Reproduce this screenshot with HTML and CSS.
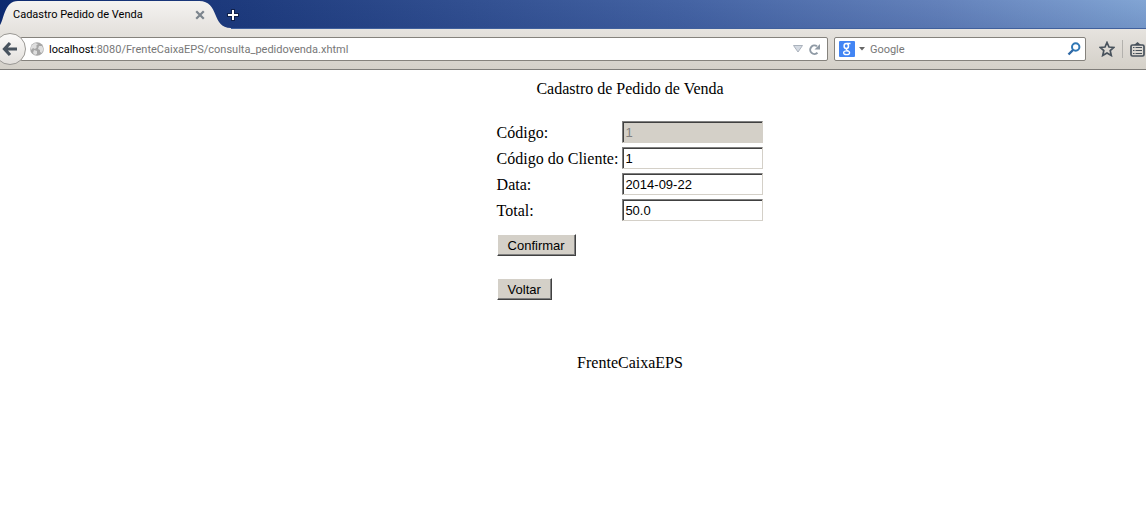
FILE: index.html
```html
<!DOCTYPE html>
<html lang="pt-BR">
<head>
<meta charset="utf-8">
<title>Cadastro Pedido de Venda</title>
<link rel="stylesheet" href="styles.css">
</head>
<body>
<header class="browser">
  <div class="tabs">
    <div class="tab">
      <svg class="tab-shape" width="234" height="29" viewBox="0 0 234 29" aria-hidden="true">
        <defs><linearGradient id="tabfill" x1="0" y1="0" x2="0" y2="1"><stop offset="0" stop-color="#f4f3f1"/><stop offset="1" stop-color="#e6e3df"/></linearGradient></defs>
        <path d="M0 29V25C4 20 4 1 18 1H199C220 1 211 28 231 28V29Z" fill="url(#tabfill)"/>
      </svg>
      <span class="tab-title">Cadastro Pedido de Venda</span>
      <button class="icon-button" type="button" aria-label="Fechar aba">
        <svg width="10" height="10" viewBox="0 0 10 10"><path d="M2 2L8 8M8 2L2 8" stroke="#7c858d" stroke-width="2.2" stroke-linecap="square"/></svg>
      </button>
    </div>
    <button class="icon-button" type="button" aria-label="Nova aba">
      <svg width="14" height="14" viewBox="0 0 14 14"><path d="M7 1V13M1 7H13" stroke="#10204a" stroke-width="4"/><path d="M7 2V12M2 7H12" stroke="#fff" stroke-width="2"/></svg>
    </button>
  </div>
  <div class="toolbar">
    <button class="back" type="button" aria-label="Voltar uma página">
      <svg width="16" height="16" viewBox="0 0 16 16"><path d="M8 2L2.500 8L8 14M3 8H15" fill="none" stroke="#48535e" stroke-width="3.200"/></svg>
    </button>
    <div class="field address">
      <svg width="14" height="14" viewBox="0 0 14 14" aria-hidden="true"><circle cx="7" cy="7" r="6.800" fill="#a6a6a6"/><path d="M2 3L5 1L8 2L6 4L7 5L5 7L3 6L1 8L0.500 6ZM9 4L12 4L13.500 7L12 11L10 10L10 8L8 7ZM4 8L7 9L7 12L5 13L3 11Z" fill="#dedede"/></svg>
      <a class="url" href="#"><span class="host">localhost</span>:8080/FrenteCaixaEPS/consulta_pedidovenda.xhtml</a>
      <button class="icon-button" type="button" aria-label="Histórico">
        <svg width="10" height="8" viewBox="0 0 10 8"><path d="M0.500 0.500H9.500L5 7Z" fill="#d4dae2" stroke="#aab2bc"/></svg>
      </button>
      <button class="icon-button" type="button" aria-label="Recarregar">
        <svg width="13" height="13" viewBox="0 0 13 13"><path d="M9 3.200A4.300 4.300 0 1 0 9.500 9.800" fill="none" stroke="#8f9aa5" stroke-width="2"/><path d="M12 1V6.500H6.500Z" fill="#8f9aa5"/></svg>
      </button>
    </div>
    <div class="field search">
      <svg width="16" height="16" viewBox="0 0 16 16" aria-hidden="true"><rect width="16" height="16" rx="1" fill="#4285f4"/><g fill="none" stroke="#fff"><ellipse cx="7.300" cy="5" rx="2.200" ry="2.500" stroke-width="1.500"/><path d="M8 2.500H11.500M8.500 7.500C6 8.500 8 9.500 9.500 10" stroke-width="1.300"/><ellipse cx="7.600" cy="11.700" rx="3" ry="1.900" stroke-width="1.300"/></g></svg>
      <svg width="6" height="4" viewBox="0 0 6 4" aria-hidden="true"><path d="M0 0H6L3 3.500Z" fill="#666"/></svg>
      <input class="query" type="text" placeholder="Google" aria-label="Pesquisar">
      <button class="icon-button" type="button" aria-label="Buscar">
        <svg width="14" height="14" viewBox="0 0 14 14"><circle cx="8.700" cy="5" r="3.700" fill="none" stroke="#2f77b5" stroke-width="2"/><path d="M6 8L1.500 12.500" stroke="#2f68a5" stroke-width="2.400"/></svg>
      </button>
    </div>
    <div class="actions">
      <button class="icon-button" type="button" aria-label="Favoritar">
        <svg width="16" height="16" viewBox="0 0 16 16"><path d="M8 1.500L10 6L14.800 6.400L11.200 9.600L12.300 14.500L8 12L3.700 14.500L4.800 9.600L1.200 6.400L6 6Z" fill="none" stroke="#48525c" stroke-width="1.700"/></svg>
      </button>
      <span class="divider"></span>
      <button class="icon-button" type="button" aria-label="Mostrar favoritos">
        <svg width="15" height="15" viewBox="0 0 15 15"><path d="M4 3L7.500 0L11 3Z" fill="#48525c"/><rect x="1" y="3" width="13" height="11" rx="1.500" fill="none" stroke="#48525c" stroke-width="1.700"/><path d="M3 5.500H4.500M5.500 5.500H12M3 8.500H4.500M5.500 8.500H12M3 11.500H4.500M5.500 11.500H12" stroke="#48525c"/></svg>
      </button>
    </div>
  </div>
</header>
<main class="page">
  <div class="title">Cadastro de Pedido de Venda</div>
  <form class="order">
    <div class="fields">
      <label for="codigo">Código:</label><input class="box" id="codigo" type="text" value="1" disabled>
      <label for="cliente">Código do Cliente:</label><input class="box" id="cliente" type="text" value="1">
      <label for="data">Data:</label><input class="box" id="data" type="text" value="2014-09-22">
      <label for="total">Total:</label><input class="box" id="total" type="text" value="50.0">
    </div>
    <button class="push" type="button">Confirmar</button>
    <button class="push" type="button">Voltar</button>
  </form>
  <footer>FrenteCaixaEPS</footer>
</main>
</body>
</html>
```
FILE: styles.css
```css
* { box-sizing: border-box; }
body { margin: 0; background: #fff; color: #000; font: 16px/18px "Liberation Serif", "Times New Roman", serif; }
svg { display: block; flex: none; }
.browser { font: 11px/14px Roboto, Tahoma, sans-serif; }
.icon-button { border: 0; padding: 0; background: none; flex: none; }
.tabs { display: flex; align-items: center; height: 29px; border-bottom: 1px solid #40609c; background: linear-gradient(0deg, rgba(10, 36, 106, .12), transparent), linear-gradient(90deg, #0d2a70, #1f3c7e 22%, #4564a4 60%, #6482bb 82%, #82a5d4); }
.tab { position: relative; display: flex; align-items: center; justify-content: space-between; width: 226px; height: 29px; padding: 2px 21px 0 13px; }
.tab-shape { position: absolute; left: 0; top: 0; }
.tab-title, .tab .icon-button { position: relative; }
.tabs > .icon-button { padding-top: 2px; }
.toolbar { display: flex; align-items: center; height: 41px; border-bottom: 1px solid #7f7d79; background: linear-gradient(#e6e3df, #d4d0c8); }
.back { position: relative; z-index: 1; flex: none; width: 32px; height: 32px; margin-left: -6px; padding: 0 0 0 7px; border: 1px solid #9a9894; border-radius: 50%; background: linear-gradient(#fbfaf9, #e3e0dc); }
.field { display: flex; align-items: center; height: 24px; border: 1px solid #85827c; border-radius: 2px; background: #fff; }
.address { flex: 1; min-width: 0; gap: 5px; margin-left: -6px; padding: 0 6px 0 9px; }
.url { flex: 1; min-width: 0; padding-top: 2px; overflow: hidden; white-space: nowrap; color: #777; text-decoration: none; }
.host { color: #000; }
.search { width: 22%; gap: 4px; margin-left: 6px; padding: 0 4px; }
.query { flex: 1; min-width: 0; padding: 2px 0 0 1px; border: 0; outline: 0; background: none; font: inherit; }
.query::placeholder { color: #777; opacity: 1; }
.actions { display: flex; align-items: center; gap: 7px; padding-left: 13px; margin-right: 1px; }
.divider { width: 1px; height: 18px; background: #b3b1ad; }
.page { display: flex; flex-direction: column; align-items: center; padding: 10px 0 24px 114px; }
.order { display: flex; flex-direction: column; align-items: flex-start; gap: 22px; margin: 23px 0 54px; }
.fields { display: grid; grid-template-columns: auto auto; align-items: center; gap: 4px; margin-bottom: -9px; }
.fields label { padding-top: 2px; }
.box { width: 141px; height: 22px; padding: 0 2px; border: 1px solid; border-color: #808080 #d4d0c8 #d4d0c8 #808080; background: #fff; box-shadow: inset 1px 1px #404040; font: 13px/16px "Liberation Sans", Arial, sans-serif; color: #000; }
.box:disabled { background: #d4d0c8; color: #808080; }
.push { height: 22px; padding: 1px 10px 0; border: 1px solid; border-color: #fff #404040 #404040 #fff; background: #d4d0c8; box-shadow: inset -1px -1px #808080; font: 13px/16px "Liberation Sans", Arial, sans-serif; color: #000; }
```
